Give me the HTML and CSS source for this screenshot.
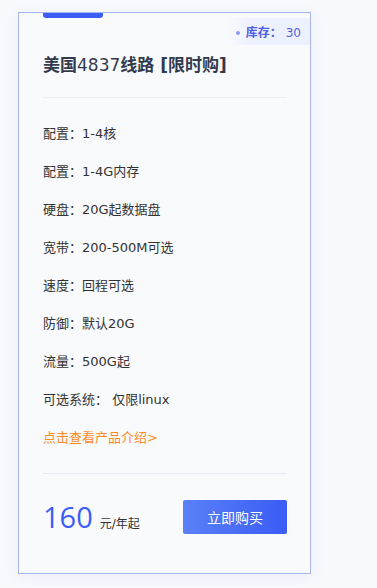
FILE: index.html
```html
<!DOCTYPE html>
<html lang="zh-CN">
<head>
    <meta charset="UTF-8">
    <meta name="viewport" content="width=device-width, initial-scale=1.0">
    <title>美国4837线路</title>
    <link rel="stylesheet" href="styles.css">
</head>
<body>
    <div class="card">
        <div class="accent"></div>
        <div class="stock"><span class="dot"></span><b>库存：</b>30</div>
        <h2 class="title">美国<span class="en">4837</span>线路 [限时购]</h2>
        <ul class="specs">
            <li>配置：1-4核</li>
            <li>配置：1-4G内存</li>
            <li>硬盘：20G起数据盘</li>
            <li>宽带：200-500M可选</li>
            <li>速度：回程可选</li>
            <li>防御：默认20G</li>
            <li>流量：500G起</li>
            <li>可选系统： 仅限linux</li>
            <li><a class="more" href="#">点击查看产品介绍&gt;</a></li>
        </ul>
        <div class="footer">
            <div class="price"><span class="num">160</span><span class="unit">元/年起</span></div>
            <button class="btn">立即购买</button>
        </div>
    </div>
</body>
</html>
```

FILE: styles.css
```css
* {
    margin: 0;
    padding: 0;
    box-sizing: border-box;
}
body {
    font-family: "DejaVu Sans", "Noto Sans CJK SC", sans-serif;
    background: #f8f9fd;
    padding: 12px 18px;
}
.card {
    position: relative;
    width: 293px;
    height: 562px;
    background: #f9fafc;
    border: 1px solid #a9b6f5;
    box-shadow: 0 4px 16px rgba(80, 100, 180, 0.06);
    padding: 40px 23px 0 24px;
}
.accent {
    position: absolute;
    top: 0;
    left: 24px;
    width: 60px;
    height: 5px;
    background: #3d5ef5;
    border-radius: 0 0 3px 3px;
}
.stock {
    position: absolute;
    top: 5px;
    right: 0;
    height: 27px;
    line-height: 27px;
    padding: 0 9px 0 8px;
    font-size: 12px;
    color: #4d5fe0;
    background: linear-gradient(90deg, rgba(238, 241, 254, 0), #edf0fe 30%);
}
.stock b {
    font-family: "Noto Sans CJK SC", sans-serif;
    font-weight: 700;
    margin-right: 4px;
}
.dot {
    display: inline-block;
    width: 4px;
    height: 4px;
    border-radius: 50%;
    background: #8c9af0;
    vertical-align: middle;
    margin: -2px 6px 0 0;
}
.title {
    font-size: 17px;
    line-height: 24px;
    font-weight: 700;
    color: #333a4d;
    padding-bottom: 20px;
    border-bottom: 1px solid #eceef3;
}
.title .en {
    font-weight: 400;
}
.specs {
    list-style: none;
    padding: 17px 0 16px;
    border-bottom: 1px solid #e6e9fa;
}
.specs li {
    font-size: 13px;
    line-height: 38px;
    color: #333;
}
.more {
    color: #ff8a1c;
    text-decoration: none;
}
.footer {
    display: flex;
    justify-content: space-between;
    align-items: center;
    padding-top: 23px;
}
.price {
    display: flex;
    align-items: baseline;
    color: #333;
}
.num {
    font-family: "Open Sans", sans-serif;
    font-size: 29px;
    color: #3d5ef5;
    margin-right: 7px;
}
.unit {
    font-size: 12px;
}
.btn {
    width: 104px;
    height: 34px;
    border: none;
    border-radius: 2px;
    background: linear-gradient(90deg, #5a80f7, #3b5cf5);
    color: #fff;
    font-family: "Noto Sans CJK SC", sans-serif;
    font-size: 14px;
    cursor: pointer;
}
```
